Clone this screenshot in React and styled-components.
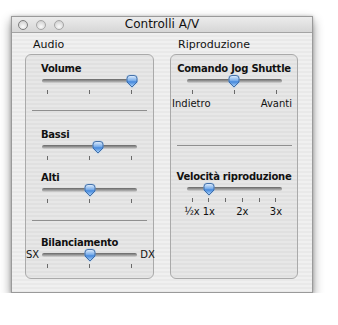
import styled, { createGlobalStyle } from "styled-components";

const GlobalStyle = createGlobalStyle`
  html, body { margin: 0; padding: 0; background: #ffffff; }
  body { font-family: "DejaVu Sans", "Liberation Sans", sans-serif; color: #000; }
`;

const TICK_SPAN = 84;

function Thumb() {
  return (
    <svg width="14" height="15" viewBox="0 0 14 15">
      <defs>
        <linearGradient id="thumbFill" x1="0" y1="0" x2="0" y2="1">
          <stop offset="0" stopColor="#e4f0fd" />
          <stop offset="0.45" stopColor="#76abea" />
          <stop offset="0.55" stopColor="#4588dc" />
          <stop offset="1" stopColor="#b3d8fb" />
        </linearGradient>
      </defs>
      <path d="M2 4.5 Q2 1.5 5 1.5 H9 Q12 1.5 12 4.5 V8 L7 13 L2 8 Z" fill="#9cc4f0" opacity="0.45" stroke="#9cc4f0" strokeWidth="2" />
      <path d="M2 4.5 Q2 1.5 5 1.5 H9 Q12 1.5 12 4.5 V8 L7 13 L2 8 Z" fill="url(#thumbFill)" stroke="#35649f" strokeWidth="0.9" />
    </svg>
  );
}

function Slider({ label, center, value, ticks, left, right, under, scale }) {
  return (
    <SliderBlock>
      <Caption $center={center}>{label}</Caption>
      <TrackRow>
        <SideLabel $side="left">{left}</SideLabel>
        <Track>
          <ThumbSpot style={{ left: 5.5 + value * TICK_SPAN - 7 }}>
            <Thumb />
          </ThumbSpot>
        </Track>
        <SideLabel $side="right">{right}</SideLabel>
      </TrackRow>
      <Ticks>
        {Array.from({ length: ticks }).map((_, i) => (
          <Tick key={i} />
        ))}
      </Ticks>
      {under && (
        <EndLabels>
          <span>{under[0]}</span>
          <span>{under[1]}</span>
        </EndLabels>
      )}
      {scale && (
        <ScaleLabels $n={scale.length}>
          {scale.map((s, i) => (
            <span key={i}>{s}</span>
          ))}
        </ScaleLabels>
      )}
    </SliderBlock>
  );
}

export default function App() {
  return (
    <>
      <GlobalStyle />
      <Window>
        <TitleBar>
          <Lights>
            <Light $dark />
            <Light />
            <Light />
          </Lights>
          <Title>Controlli A/V</Title>
          <span />
        </TitleBar>
        <Body>
          <Column>
            <GroupLabel>Audio</GroupLabel>
            <GroupBox>
              <Section $top={7}>
                <Slider label="Volume" value={1} ticks={3} />
              </Section>
              <Separator $top={16} />
              <Section $top={17}>
                <Slider label="Bassi" value={0.6} ticks={3} />
              </Section>
              <Section $top={11}>
                <Slider label="Alti" value={0.5} ticks={3} />
              </Section>
              <Separator $top={17} />
              <Section $top={15}>
                <Slider label="Bilanciamento" value={0.5} ticks={3} left="SX" right="DX" />
              </Section>
            </GroupBox>
          </Column>
          <Column>
            <GroupLabel>Riproduzione</GroupLabel>
            <GroupBox>
              <Section $top={7}>
                <Slider
                  label="Comando Jog Shuttle"
                  center
                  value={0.5}
                  ticks={3}
                  under={["Indietro", "Avanti"]}
                />
              </Section>
              <Separator $top={35} $right={5} />
              <Section $top={24}>
                <Slider
                  label="Velocità riproduzione"
                  center
                  value={0.2}
                  ticks={6}
                  scale={["½x", "1x", "", "2x", "", "3x"]}
                />
              </Section>
            </GroupBox>
          </Column>
        </Body>
      </Window>
    </>
  );
}

const Window = styled.div`
  box-sizing: border-box;
  margin: 16px 0 0 11px;
  width: 302px;
  height: 277px;
  display: flex;
  flex-direction: column;
  border: 1px solid #9a9a9a;
  box-shadow: 0 5px 10px rgba(0, 0, 0, 0.45), 0 0 3px rgba(0, 0, 0, 0.2);
  background: repeating-linear-gradient(
    to bottom,
    #f0f0f0 0,
    #f0f0f0 2px,
    #e9e9e9 2px,
    #e9e9e9 4px
  );
`;

const TitleBar = styled.div`
  height: 15px;
  display: grid;
  grid-template-columns: 1fr auto 1fr;
  align-items: center;
  background: linear-gradient(#ececec, #d6d6d6);
  border-bottom: 1px solid #a4a4a4;
`;

const Lights = styled.div`
  display: flex;
  gap: 8px;
  padding-left: 6px;
`;

const Light = styled.span`
  box-sizing: border-box;
  width: 10px;
  height: 10px;
  border-radius: 50%;
  border: 1px solid ${(p) => (p.$dark ? "#7e7e7e" : "#a6a6a6")};
  background: radial-gradient(circle at 50% 70%, #fafafa 0, #dcdcdc 60%, #c4c4c4 100%);
`;

const Title = styled.div`
  font-size: 12px;
  line-height: 15px;
  color: #111;
`;

const Body = styled.div`
  flex: 1;
  display: grid;
  grid-template-columns: 129px 128px;
  gap: 16px;
  padding: 5px 13px 13px 13px;
`;

const Column = styled.div`
  display: flex;
  flex-direction: column;
`;

const GroupLabel = styled.div`
  font-size: 11px;
  line-height: 14px;
  height: 16px;
  padding-left: 8px;
  color: #111;
`;

const GroupBox = styled.div`
  flex: 1;
  display: flex;
  flex-direction: column;
  border: 1px solid #aaaaaa;
  border-radius: 6px;
  background: rgba(0, 0, 0, 0.035);
`;

const Section = styled.div`
  margin-top: ${(p) => p.$top}px;
`;

const Separator = styled.div`
  margin: ${(p) => p.$top}px ${(p) => p.$right ?? 6}px 0 6px;
  height: 1px;
  background: #8f8f8f;
`;

const SliderBlock = styled.div`
  display: flex;
  flex-direction: column;
`;

const Caption = styled.div`
  font-size: 10px;
  font-weight: bold;
  line-height: 13px;
  letter-spacing: -0.25px;
  color: #111;
  text-align: ${(p) => (p.$center ? "center" : "left")};
  padding-left: ${(p) => (p.$center ? 0 : 15)}px;
  white-space: nowrap;
`;

const TrackRow = styled.div`
  height: 12px;
  display: grid;
  grid-template-columns: 1fr 95px 1fr;
  align-items: center;
`;

const SideLabel = styled.span`
  font-size: 10px;
  line-height: 12px;
  color: #111;
  justify-self: ${(p) => (p.$side === "left" ? "end" : "start")};
  padding: ${(p) => (p.$side === "left" ? "0 3px 0 0" : "0 0 0 3px")};
`;

const Track = styled.div`
  position: relative;
  height: 4px;
  border-radius: 2px;
  background: linear-gradient(#666666, #a4a4a4 60%, #d6d6d6);
`;

const ThumbSpot = styled.div`
  position: absolute;
  top: -5px;
  width: 14px;
  height: 15px;
  line-height: 0;
`;

const Ticks = styled.div`
  width: ${TICK_SPAN + 1}px;
  margin: 3px auto 0;
  height: 4px;
  display: flex;
  justify-content: space-between;
`;

const Tick = styled.span`
  width: 1px;
  height: 4px;
  background: #6a6a6a;
`;

const EndLabels = styled.div`
  display: flex;
  justify-content: space-between;
  margin: 3px 5px 0 1px;
  font-size: 10px;
  line-height: 13px;
  color: #111;
`;

const ScaleLabels = styled.div`
  display: grid;
  grid-template-columns: repeat(${(p) => p.$n}, ${TICK_SPAN / 5}px);
  margin: 3px 0 0 ${(126 - TICK_SPAN) / 2 - TICK_SPAN / 10}px;
  font-size: 10px;
  line-height: 13px;
  color: #111;
  text-align: center;
  white-space: nowrap;
  & span {
    display: block;
  }
`;
